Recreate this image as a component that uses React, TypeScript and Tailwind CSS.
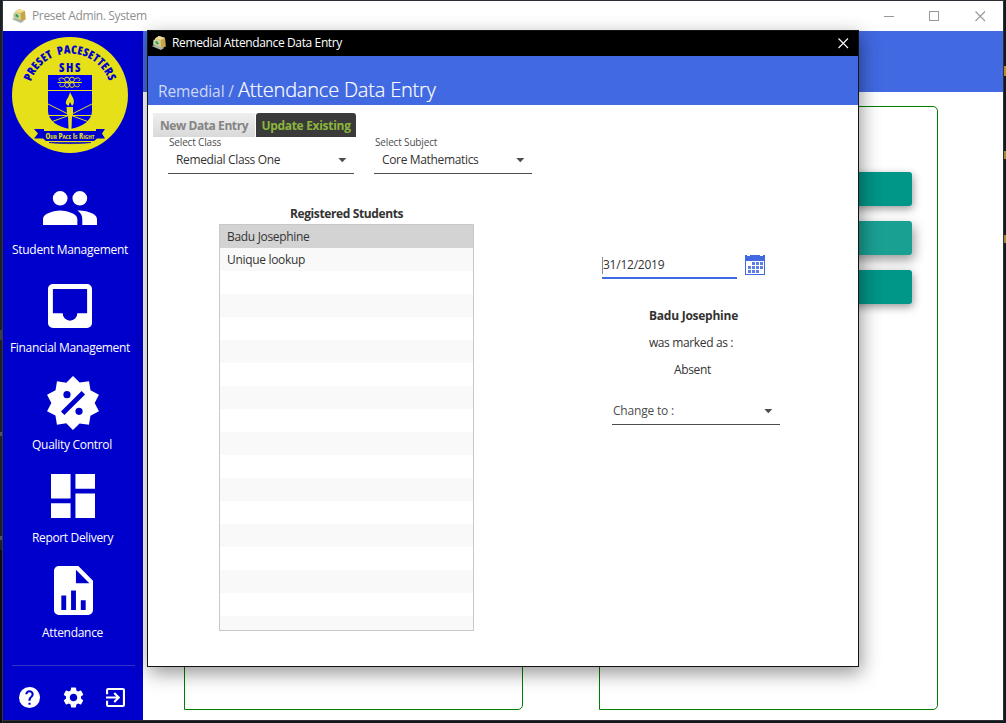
import React from "react";
import { MdSettings } from "react-icons/md";

const PEOPLE =
  "M16,13C15.71,13 15.38,13 15.03,13.05C16.19,13.89 17,15 17,16.5V19H23V16.5C23,14.17 18.33,13 16,13M8,13C5.67,13 1,14.17 1,16.5V19H15V16.5C15,14.17 10.33,13 8,13M8,11A3,3 0 0,0 11,8A3,3 0 0,0 8,5A3,3 0 0,0 5,8A3,3 0 0,0 8,11M16,11A3,3 0 0,0 19,8A3,3 0 0,0 16,5A3,3 0 0,0 13,8A3,3 0 0,0 16,11Z";
const INBOX =
  "M19,15H15A3,3 0 0,1 12,18A3,3 0 0,1 9,15H5V5H19M19,3H5C3.89,3 3,3.9 3,5V19A2,2 0 0,0 5,21H19A2,2 0 0,0 21,19V5A2,2 0 0,0 19,3Z";
const SALE =
  "M18.65,2.85L19.26,6.71L22.77,8.5L21,12L22.78,15.5L19.24,17.29L18.63,21.15L14.74,20.54L11.97,23.3L9.19,20.5L5.33,21.14L4.71,17.25L1.22,15.47L3,11.97L1.23,8.5L4.74,6.69L5.35,2.86L9.22,3.5L12,0.69L14.77,3.46L18.65,2.85M9.5,7A1.5,1.5 0 0,0 8,8.5A1.5,1.5 0 0,0 9.5,10A1.5,1.5 0 0,0 11,8.5A1.5,1.5 0 0,0 9.5,7M14.5,14A1.5,1.5 0 0,0 13,15.5A1.5,1.5 0 0,0 14.5,17A1.5,1.5 0 0,0 16,15.5A1.5,1.5 0 0,0 14.5,14M8.41,17L17,8.41L15.59,7L7,15.59L8.41,17Z";
const DASHBOARD = "M13,3V9H21V3M13,21H21V11H13M3,21H11V15H3M3,13H11V3H3V13Z";
const FILE_CHART =
  "M13,9H18.5L13,3.5V9M6,2H14L20,8V20A2,2 0 0,1 18,22H6C4.89,22 4,21.1 4,20V4C4,2.89 4.89,2 6,2M7,20H9V14H7V20M11,20H13V12H11V20M15,20H17V16H15V20Z";
const HELP =
  "M15.07,11.25L14.17,12.17C13.45,12.89 13,13.5 13,15H11V14.5C11,13.39 11.45,12.39 12.17,11.67L13.41,10.41C13.78,10.05 14,9.55 14,9C14,7.89 13.1,7 12,7A2,2 0 0,0 10,9H8A4,4 0 0,1 12,5A4,4 0 0,1 16,9C16,9.88 15.64,10.67 15.07,11.25M13,19H11V17H13M12,2A10,10 0 0,0 2,12A10,10 0 0,0 12,22A10,10 0 0,0 22,12C22,6.47 17.5,2 12,2Z";
const EXIT =
  "M19,3H5C3.89,3 3,3.89 3,5V9H5V5H19V19H5V15H3V19A2,2 0 0,0 5,21H19A2,2 0 0,0 21,19V5C21,3.89 20.1,3 19,3M10.08,15.58L11.5,17L16.5,12L11.5,7L10.08,8.41L12.67,11H3V13H12.67L10.08,15.58Z";

function BoxIcon() {
  return (
    <svg className="h-4 w-4 shrink-0" viewBox="0 0 16 16">
      <path d="M4 3.500 L8 1 L14 3 L14.500 11.500 L10 13.500 L4 11 Z" fill="#dcc065" />
      <path d="M4 3.500 L8 1 L14 3 L10 5 Z" fill="#f0dd94" />
      <path d="M10 5 L14 3 L14.500 11.500 L10 13.500 Z" fill="#c4a54a" />
      <path d="M2.500 5 L5 4 L9.500 6 V12 L6 11 L2 9.500 Z" fill="#cfd29a" />
      <path d="M3.500 6 L8 7 V10 L3.500 9 Z" fill="#9dc49a" />
      <path d="M5 6.500 L7 9" stroke="#1d9a3c" strokeWidth="1.5" />
      <path d="M0.500 11 L4 10 L13 13 L10 15 Z" fill="#a9b3a4" />
    </svg>
  );
}

function Crest() {
  return (
    <svg className="h-[118px] w-[118px]" viewBox="11 36 118 118">
      <defs>
        <path id="arc" d="M 32.19 111.83 A 41.4 41.4 0 1 1 107.81 111.83" />
      </defs>
      <circle cx="70" cy="95" r="58" fill="#e6e018" />
      <g className="font-['Open_Sans'] font-extrabold [font-stretch:75%]" fill="#0000cd">
        <text fontSize="11.5" textAnchor="middle" letterSpacing="0.2" wordSpacing="2.5">
          <textPath href="#arc" startOffset="50%">PRESET PACESETTERS</textPath>
        </text>
        <text x="59" y="72" fontSize="12" letterSpacing="1.6">SHS</text>
      </g>
      <path d="M48 75 H92 V111 C92 120 83 127 70 129 C57 127 48 120 48 111 Z" fill="#0000f0" />
      <g stroke="#e6e018" fill="none" strokeWidth="1">
        <path d="M48 90.5 H92 M48 115.5 H92 M48 104 L70 115 L92 104 M51 122 L70 115 L89 122" />
        <circle cx="67" cy="79.5" r="2.4" />
        <circle cx="72" cy="79.5" r="2.4" />
        <circle cx="67" cy="85" r="2.4" />
        <circle cx="72" cy="85" r="2.4" />
        <path d="M57.500 82.500 H82 M64 79 C60 76 57 80 60.500 81 M75 79 C79 76 82 80 78.500 81 M64 86 C61 88 58 86 60.500 84 M75 86 C78 88 81 86 78.500 84" />
      </g>
      <path d="M70 92 C72 97 75 99 73.500 104 L72 106 L70 102 L68.500 106 L66 104 C65 100 69 98 70 92 M66.500 107 H73 V114 L72 116 L71.500 129 H68.500 L68 116 L67 114 Z" fill="#e6e018" />
      <path d="M34 129 H44 V131 H96 V129 H105 L102 133.500 L105 138.500 H97 L94 141 H46 L43 138.500 H34 L38 133.500 Z" fill="#0000cd" />
      <path d="M49 142.500 H91 C82 144 58 144 49 142.500 Z" fill="#0000cd" stroke="#0000cd" strokeWidth="0.6" />
      <text x="45.500" y="138.800" fontSize="8" fill="#e6e018" className="font-['Open_Sans'] font-bold [font-stretch:75%] [font-variant-caps:small-caps]" textLength="49" lengthAdjust="spacingAndGlyphs">
        Our Pace Is Right
      </text>
    </svg>
  );
}

function NavItem({ label, path, box, icon, text, item }: { label: string; path: string; box: string; icon: string; text: string; item: string }) {
  return (
    <div className={`flex flex-col items-center ${item}`}>
      <svg className={`shrink-0 fill-white ${icon}`} viewBox={box} preserveAspectRatio="none">
        <path d={path} />
      </svg>
      <span className={`leading-4 whitespace-nowrap text-white ${text}`}>{label}</span>
    </div>
  );
}

function Caret() {
  return (
    <svg className="h-[5px] w-[9px] fill-[#4d4d4d]" viewBox="0 0 9 5">
      <path d="M0.300 0 H8.300 L4.300 4.300 Z" />
    </svg>
  );
}

function Cross({ className }: { className: string }) {
  return (
    <svg className={`h-[11px] w-[11px] ${className}`} viewBox="0 0 11 11" fill="none">
      <path d="M0.500 0.500 L10 10 M10 0.500 L0.500 10" strokeWidth="1.1" />
    </svg>
  );
}

function SelectField({ label, value, width, tracking }: { label: string; value: string; width: string; tracking: string }) {
  return (
    <div className={width}>
      <div className="h-[14px] pl-px text-[10px] leading-[10px] tracking-[-0.16px] text-[#4d4d4d]">{label}</div>
      <div className="flex h-[23px] items-start justify-between border-b border-[#4d4d4d] pr-[7px] pl-2">
        <span className={`pt-px leading-4 text-[#333] ${tracking}`}>{value}</span>
        <span className="pt-[7px]">
          <Caret />
        </span>
      </div>
    </div>
  );
}

function Calendar() {
  const dots = [
    [8, 8], [12, 8], [16, 8],
    [4, 12], [8, 12], [12, 12], [16, 12],
    [4, 16], [8, 16], [12, 16],
  ];
  return (
    <svg className="h-5 w-5" viewBox="0 0 20 20" shapeRendering="crispEdges">
      <path d="M0 0 H20 V20 H0 Z M1 6 V19 H19 V6 Z" fill="#4169e1" fillRule="evenodd" />
      <path d="M2 0 H5 V1 H2 Z M15 0 H18 V1 H15 Z" fill="#fff" />
      {dots.map(([x, y]) => (
        <rect key={`${x}-${y}`} x={x - 1} y={y - 1} width="3" height="3" fill="#5c7de6" />
      ))}
    </svg>
  );
}

function Sidebar() {
  return (
    <aside className="flex w-[140px] shrink-0 flex-col bg-[#0000cd]">
      <div className="h-[160px] pt-[5px] pl-2">
        <Crest />
      </div>
      <NavItem item="h-[93px] -ml-[6px]" label="Student Management" path={PEOPLE} box="1 5 22 14" icon="h-[34px] w-[54px]" text="mt-[17px] tracking-[-0.3px]" />
      <NavItem item="h-[92px] -ml-[6px]" label="Financial Management" path={INBOX} box="3 3 18 18" icon="h-11 w-11" text="mt-[12px] tracking-[-0.32px]" />
      <NavItem item="h-[98px] -ml-[2px]" label="Quality Control" path={SALE} box="1.2 .7 21.6 22.6" icon="h-[54px] w-[52px] ml-[2px]" text="mt-[7px] tracking-[-0.3px]" />
      <NavItem item="h-[92px] -ml-[1px]" label="Report Delivery" path={DASHBOARD} box="3 3 18 18" icon="h-11 w-11" text="mt-[12px] tracking-[-0.33px]" />
      <NavItem item="h-[99px] -ml-[1px]" label="Attendance" path={FILE_CHART} box="4 2 16 20" icon="h-[49px] w-[39px] ml-px" text="mt-[10px] tracking-[-0.3px]" />
      <div className="mr-2 ml-[9px] border-t border-[#3333c8]" />
      <div className="flex items-center pt-[21px] pl-4">
        <svg className="h-[21px] w-[21px] fill-white" viewBox="2 2 20 20"><path d={HELP} /></svg>
        <MdSettings className="-my-0.5 ml-[21px] h-[25px] w-[25px] text-white" />
        <svg className="ml-[20px] h-[19px] w-[19px] fill-white" viewBox="3 3 18 18"><path d={EXIT} /></svg>
      </div>
    </aside>
  );
}

function Backdrop() {
  return (
    <main className="flex flex-1 flex-col bg-white">
      <div className="h-[61px] bg-[#4169e1]" />
      <div className="flex gap-[76px] pt-[14px] pl-[41px]">
        <div className="h-[604px] w-[339px] rounded-t-[5px] rounded-br-[5px] border border-[#008000]" />
        <div className="flex h-[604px] w-[339px] flex-col items-end gap-[15px] rounded-t-[5px] rounded-br-[5px] border border-[#008000] pt-[65px] pr-[25px]">
          <div className="h-[34px] w-[200px] rounded-[3px] bg-[#009688] shadow-[1px_3px_8px_rgba(0,0,0,0.4)]" />
          <div className="h-[34px] w-[200px] rounded-[3px] bg-[#1aa093] shadow-[2px_5px_12px_rgba(0,0,0,0.4)]" />
          <div className="h-[34px] w-[200px] rounded-[3px] bg-[#009688] shadow-[1px_3px_8px_rgba(0,0,0,0.4)]" />
        </div>
      </div>
    </main>
  );
}

function StudentList() {
  const names = ["Badu Josephine", "Unique lookup", ...Array<string>(16).fill("")];
  return (
    <section className="w-[255px] pt-8">
      <h2 className="text-center leading-4 font-bold tracking-[-0.38px] text-[#333]">Registered Students</h2>
      <ul className="mt-[2px] h-[407px] overflow-hidden border border-[#c8c8c8]">
        {names.map((name, i) => (
          <li
            key={i}
            className={`h-[23px] pt-[4px] pl-[7px] leading-4 tracking-[-0.32px] text-[#333] ${
              i === 0 ? "bg-[#d3d3d3]" : i % 2 ? "bg-[#f9f9f9]" : "bg-white"
            }`}
          >
            {name}
          </li>
        ))}
      </ul>
    </section>
  );
}

function EntryPanel() {
  return (
    <section className="ml-[128px] flex w-[180px] flex-col pt-[80px] text-[#333]">
      <div className="flex">
        <div className="flex h-[25px] w-[135px] items-start border-b-2 border-[#4169e1] pt-[3px]">
          <span className="h-[17px] w-px bg-[#888]" />
          <span className="leading-4 tracking-[-0.24px]">31/12/2019</span>
        </div>
        <div className="pt-px pl-2">
          <Calendar />
        </div>
      </div>
      <div className="flex flex-col items-center gap-[11px] pt-[29px] pl-px">
        <span className="pl-[2px] leading-4 font-bold tracking-[-0.25px]">Badu Josephine</span>
        <span className="mr-[3px] leading-4 tracking-[-0.36px]">was marked as :</span>
        <span className="leading-4 tracking-[-0.3px]">Absent</span>
      </div>
      <div className="mt-[25px] ml-[10px] flex h-[22px] w-[168px] justify-between border-b border-[#4d4d4d] pr-[7px] pl-px">
        <span className="leading-4 tracking-[-0.2px] text-[#4d4d4d]">Change to :</span>
        <span className="pt-[6px]">
          <Caret />
        </span>
      </div>
    </section>
  );
}

function EntryDialog() {
  return (
    <div className="absolute top-[30px] left-[147px] flex h-[637px] w-[712px] flex-col border border-[#141414] bg-white shadow-[2px_6px_18px_rgba(0,0,0,0.42)]">
      <header className="flex h-[25px] items-start bg-black pt-[4px] pr-[9px] pl-[3px]">
        <BoxIcon />
        <span className="ml-[5px] flex-1 leading-4 tracking-[-0.37px] text-white">Remedial Attendance Data Entry</span>
        <Cross className="mt-[3px] stroke-white" />
      </header>
      <div className="flex h-[49px] items-baseline bg-[#4169e1] pt-[20px] pl-[10px] leading-7">
        <span className="text-[15.5px] tracking-[-0.1px] text-[#ced8f7]">Remedial /</span>
        <span className="ml-[4px] text-[20px] font-light tracking-[-0.2px] text-white [-webkit-text-stroke:0.2px_#fff]">Attendance Data Entry</span>
      </div>
      <div className="flex h-8 items-start gap-px pt-2 pl-[5px] font-bold">
        <div className="h-6 w-[102px] bg-linear-to-b from-[#efefef] to-[#d9d9d9] pt-px text-center leading-6 tracking-[-0.42px] text-[#848484]">New Data Entry</div>
        <div className="h-6 w-[100px] rounded-t-[3px] bg-[#3a3a3a] pt-px text-center leading-6 tracking-[-0.3px] text-[#8bb53c]">Update Existing</div>
      </div>
      <div className="flex gap-5 pl-5">
        <SelectField label="Select Class" value="Remedial Class One" width="w-[186px]" tracking="tracking-[-0.35px]" />
        <SelectField label="Select Subject" value="Core Mathematics" width="w-[158px]" tracking="tracking-[-0.34px]" />
      </div>
      <div className="flex pl-[71px]">
        <StudentList />
        <EntryPanel />
      </div>
    </div>
  );
}

export default function App() {
  return (
    <div className="relative flex h-[723px] w-[1006px] overflow-hidden bg-[#14181c] font-['Open_Sans',sans-serif] text-[12px]">
      <div className="flex w-[3px] shrink-0 flex-col border-r border-[#33363c] bg-[#1a2024]">
        <div className="mt-[330px] h-[10px] bg-[#3a3f42]" />
        <div className="mt-[92px] h-1 bg-[#50565a]" />
        <div className="mt-[100px] h-1 bg-[#50565a]" />
        <div className="mt-[10px] flex-1 bg-[#0b0c10]" />
      </div>
      <div className="flex h-[721px] w-[1001px] shrink-0 flex-col border-t border-r border-b border-[#2e2e36]">
        <div className="flex h-[30px] shrink-0 items-center bg-white pr-[17px] pl-[8px]">
          <BoxIcon />
          <span className="ml-[5px] flex-1 leading-4 tracking-[-0.36px] text-[#8f8f8f]">Preset Admin. System</span>
          <span className="h-px w-[10px] bg-[#999]" />
          <span className="ml-[35px] h-[10px] w-[10px] border border-[#999]" />
          <Cross className="ml-[36px] stroke-[#999]" />
        </div>
        <div className="flex flex-1">
          <Sidebar />
          <Backdrop />
        </div>
      </div>
      <div className="flex flex-1 flex-col bg-[#10191e] pt-[66px]">
        <div className="h-[10px] bg-[#b98a2c]" />
        <div className="mt-[75px] h-2 bg-[#a58a35]" />
        <div className="mt-[76px] h-2 bg-[#a58a35]" />
      </div>
      <EntryDialog />
    </div>
  );
}
